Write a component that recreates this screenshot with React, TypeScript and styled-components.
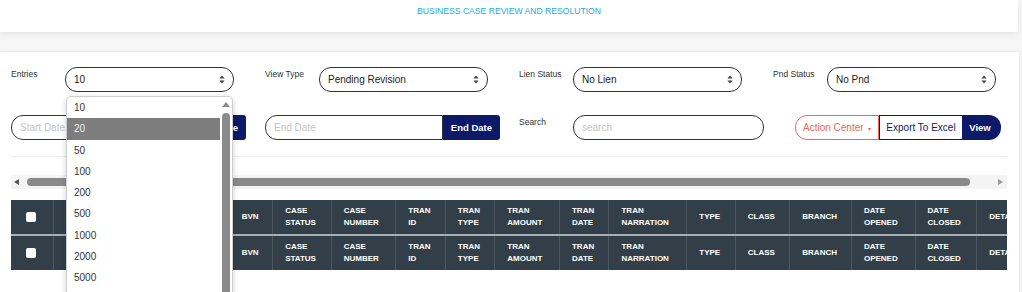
import React from 'react';
import styled, { createGlobalStyle } from 'styled-components';

const GlobalStyle = createGlobalStyle`
  body {
    margin: 0;
    background: #f6f6f6;
    font-family: 'Liberation Sans', Arial, sans-serif;
  }
`;

const entryOptions = ['10', '20', '50', '100', '200', '500', '1000', '2000', '5000', '10000'];

const columns: { label: string[]; width: number }[] = [
  { label: ['S/N'], width: 52 },
  { label: ['ACCOUNT', 'NAME'], width: 60 },
  { label: ['ACCOUNT', 'NUMBER'], width: 62 },
  { label: ['BVN'], width: 43 },
  { label: ['CASE', 'STATUS'], width: 58 },
  { label: ['CASE', 'NUMBER'], width: 64 },
  { label: ['TRAN', 'ID'], width: 49 },
  { label: ['TRAN', 'TYPE'], width: 49 },
  { label: ['TRAN', 'AMOUNT'], width: 64 },
  { label: ['TRAN', 'DATE'], width: 49 },
  { label: ['TRAN', 'NARRATION'], width: 77 },
  { label: ['TYPE'], width: 48 },
  { label: ['CLASS'], width: 54 },
  { label: ['BRANCH'], width: 61 },
  { label: ['DATE', 'OPENED'], width: 63 },
  { label: ['DATE', 'CLOSED'], width: 61 },
  { label: ['DETAILS'], width: 70 },
];

const SortIcon = () => (
  <svg width="6" height="9" viewBox="0 0 6 9">
    <path d="M3 0.5 L5.6 3.6 H0.4 Z M3 8.5 L5.6 5.4 H0.4 Z" fill="#444" />
  </svg>
);

const HeaderRow = () => (
  <Row>
    <CheckCell>
      <Check />
    </CheckCell>
    {columns.map((c) => (
      <HeadCell key={c.label.join(' ')}>
        {c.label.map((l) => (
          <div key={l}>{l}</div>
        ))}
      </HeadCell>
    ))}
  </Row>
);

const App = () => {
  return (
    <Page>
      <GlobalStyle />
      <TopCard>
        <PageTitle>Business Case Review and Resolution</PageTitle>
      </TopCard>
      <MainCard>
        <FilterRow>
          <Field>
            <Label>Entries</Label>
            <SelectBox>
              <span>10</span>
              <SortIcon />
            </SelectBox>
          </Field>
          <Field>
            <Label>View Type</Label>
            <SelectBox>
              <span>Pending Revision</span>
              <SortIcon />
            </SelectBox>
          </Field>
          <Field>
            <Label>Lien Status</Label>
            <SelectBox>
              <span>No Lien</span>
              <SortIcon />
            </SelectBox>
          </Field>
          <Field>
            <Label>Pnd Status</Label>
            <SelectBox>
              <span>No Pnd</span>
              <SortIcon />
            </SelectBox>
          </Field>
        </FilterRow>

        <FilterRow $top={23}>
          <Field>
            <DateGroup>
              <DateInput placeholder="Start Date" />
              <DateButton>Start Date</DateButton>
            </DateGroup>
          </Field>
          <Field>
            <DateGroup>
              <DateInput placeholder="End Date" />
              <DateButton>End Date</DateButton>
            </DateGroup>
          </Field>
          <Field>
            <Label>Search</Label>
            <SearchInput placeholder="search" />
          </Field>
          <ActionGroup>
            <ActionButton>
              Action Center <Caret>▾</Caret>
            </ActionButton>
            <ExportButton>Export To Excel</ExportButton>
            <ViewButton>View</ViewButton>
          </ActionGroup>
        </FilterRow>

        <Divider />

        <ScrollTrack>
          <ScrollArrow $dir="left" />
          <ScrollThumb />
          <ScrollArrow $dir="right" />
        </ScrollTrack>

        <TableWrap>
          <Table>
            <colgroup>
              <col style={{ width: 42 }} />
              {columns.map((c) => (
                <col key={c.label.join(' ')} style={{ width: c.width }} />
              ))}
            </colgroup>
            <thead>
              <HeaderRow />
            </thead>
            <tfoot>
              <HeaderRow />
            </tfoot>
          </Table>
        </TableWrap>

        <ListBox>
          {entryOptions.map((o) => (
            <Option key={o} $active={o === '20'}>
              {o}
            </Option>
          ))}
          <ListScroll>
            <ListArrow />
            <ListThumb />
          </ListScroll>
        </ListBox>
      </MainCard>
    </Page>
  );
};

const Page = styled.div`
  width: 1022px;
  height: 292px;
  overflow: hidden;
`;

const TopCard = styled.header`
  width: 1018px;
  height: 32px;
  background: #fff;
  box-shadow: 0 2px 6px rgba(0, 0, 0, 0.08);

  display: flex;
  justify-content: center;
  padding-top: 6px;
  box-sizing: border-box;
`;

const PageTitle = styled.h1`
  margin: 0;
  font-size: 8.6px;
  font-weight: 400;
  text-transform: uppercase;
  color: #27a7e2;
`;

const MainCard = styled.section`
  position: relative;
  width: 1019px;
  height: 260px;
  margin-top: 19px;
  background: #fff;
  border-top: 1px solid #ececec;
  box-shadow: 1px 0 3px rgba(0, 0, 0, 0.06);
  padding: 15px 0 0 11px;
  box-sizing: border-box;
`;

const FilterRow = styled.div<{ $top?: number }>`
  display: flex;
  align-items: flex-start;
  margin-top: ${({ $top }) => $top ?? 0}px;
`;

const Field = styled.div`
  width: 254px;
  flex-shrink: 0;
  display: flex;
  align-items: flex-start;
`;

const Label = styled.label`
  width: 54px;
  flex-shrink: 0;
  padding-top: 2px;
  font-size: 8.5px;
  color: #333;
`;

const SelectBox = styled.div`
  width: 169px;
  height: 25px;
  flex-shrink: 0;
  box-sizing: border-box;
  border: 1.5px solid #333;
  border-radius: 12px;
  padding: 0 8px;

  display: flex;
  align-items: center;
  justify-content: space-between;

  font-size: 10px;
  color: #222;
`;

const DateGroup = styled.div`
  width: 235px;
  height: 25px;
  display: flex;
`;

const DateInput = styled.input`
  flex: 1;
  min-width: 0;
  box-sizing: border-box;
  border: 1.2px solid #333;
  border-right-width: 1px;
  border-radius: 12px 0 0 12px;
  padding: 0 8px;
  font-family: inherit;
  font-size: 10px;
  outline: none;

  &::placeholder {
    color: #c4c4c4;
  }
`;

const DateButton = styled.button`
  border: none;
  border-radius: 0 3px 3px 0;
  background: #0c1a69;
  color: #fff;
  font-family: inherit;
  font-weight: 700;
  font-size: 9.5px;
  padding: 0 8px;
`;

const SearchInput = styled.input`
  width: 191px;
  height: 25px;
  flex-shrink: 0;
  box-sizing: border-box;
  border: 1.2px solid #333;
  border-radius: 12px;
  padding: 0 8px;
  font-family: inherit;
  font-size: 10px;
  outline: none;

  &::placeholder {
    color: #c4c4c4;
  }
`;

const ActionGroup = styled.div`
  display: flex;
  flex-shrink: 0;
  height: 25px;
  margin-left: 22px;
`;

const ActionButton = styled.button`
  width: 84px;
  border: 1px solid #f2625a;
  border-radius: 12px 0 0 12px;
  background: #fff;
  color: #f2625a;
  font-family: inherit;
  font-size: 10px;
  text-align: left;
  padding: 0 0 0 7px;
`;

const Caret = styled.span`
  font-size: 6px;
  margin-left: 2px;
  vertical-align: middle;
`;

const ExportButton = styled.button`
  width: 84px;
  border: 1px solid #0c1a69;
  background: #fff;
  color: #0c1a69;
  font-family: inherit;
  font-size: 10px;
  padding: 0;
`;

const ViewButton = styled.button`
  width: 38px;
  border: none;
  border-radius: 0 12px 12px 0;
  background: #0c1a69;
  color: #fff;
  font-family: inherit;
  font-weight: 700;
  font-size: 9.5px;
  padding: 0 4px 0 0;
`;

const Divider = styled.hr`
  width: 996px;
  margin: 16px 0 0;
  border: none;
  border-top: 1px solid #eeeeee;
`;

const ScrollTrack = styled.div`
  width: 996px;
  height: 14px;
  margin-top: 18px;
  background: #f4f4f4;

  display: flex;
  align-items: center;
  padding: 0 4px 0 3px;
  box-sizing: border-box;
`;

const ScrollArrow = styled.span<{ $dir: 'left' | 'right' }>`
  width: 0;
  height: 0;
  border-top: 3.5px solid transparent;
  border-bottom: 3.5px solid transparent;
  ${({ $dir }) =>
    $dir === 'left'
      ? 'border-right: 5px solid #555; margin-right: 8px;'
      : 'border-left: 5px solid #999; margin-left: auto;'}
`;

const ScrollThumb = styled.div`
  width: 943px;
  height: 8px;
  border-radius: 4px;
  background: #8a8a8a;
`;

const TableWrap = styled.div`
  width: 996px;
  margin-top: 11px;
  overflow: hidden;
`;

const Table = styled.table`
  table-layout: fixed;
  width: 1037px;
  border-collapse: collapse;
  background: #333f48;
`;

const Row = styled.tr`
  height: 35px;

  tfoot & {
    border-top: 2px solid #a9b0b5;
  }
`;

const CheckCell = styled.td`
  padding: 0 0 0 15px;
  border-right: 1px solid rgba(255, 255, 255, 0.12);
  vertical-align: middle;
`;

const Check = styled.span`
  display: block;
  width: 10px;
  height: 10px;
  border-radius: 2px;
  background: #fff;
`;

const HeadCell = styled.td`
  padding: 0 4px 0 12px;
  border-right: 1px solid rgba(255, 255, 255, 0.12);
  vertical-align: middle;
  white-space: nowrap;
  overflow: hidden;

  font-size: 8px;
  font-weight: 700;
  line-height: 12px;
  color: #fff;
`;

const ListBox = styled.div`
  position: absolute;
  left: 66px;
  top: 44px;
  width: 167px;
  height: 215px;
  box-sizing: border-box;
  background: #fff;
  border: 1px solid #cfcfcf;
  border-radius: 5px 5px 0 0;
  box-shadow: 0 2px 6px rgba(0, 0, 0, 0.18);
  overflow: hidden;
`;

const Option = styled.div<{ $active?: boolean }>`
  width: 153px;
  height: 21.3px;
  line-height: 21px;
  padding-left: 7px;
  box-sizing: border-box;
  font-size: 10px;
  background: ${({ $active }) => ($active ? '#7d7d7d' : 'transparent')};
  color: ${({ $active }) => ($active ? '#f2f2f2' : '#333')};
`;

const ListScroll = styled.div`
  position: absolute;
  top: 0;
  right: 0;
  width: 12px;
  height: 100%;
  display: flex;
  flex-direction: column;
  align-items: center;
`;

const ListArrow = styled.span`
  margin-top: 5px;
  width: 0;
  height: 0;
  border-left: 4px solid transparent;
  border-right: 4px solid transparent;
  border-bottom: 5px solid #8a8a8a;
`;

const ListThumb = styled.div`
  margin-top: 6px;
  width: 8px;
  flex: 1;
  border-radius: 4px 4px 0 0;
  background: #8a8a8a;
`;

export default App;
